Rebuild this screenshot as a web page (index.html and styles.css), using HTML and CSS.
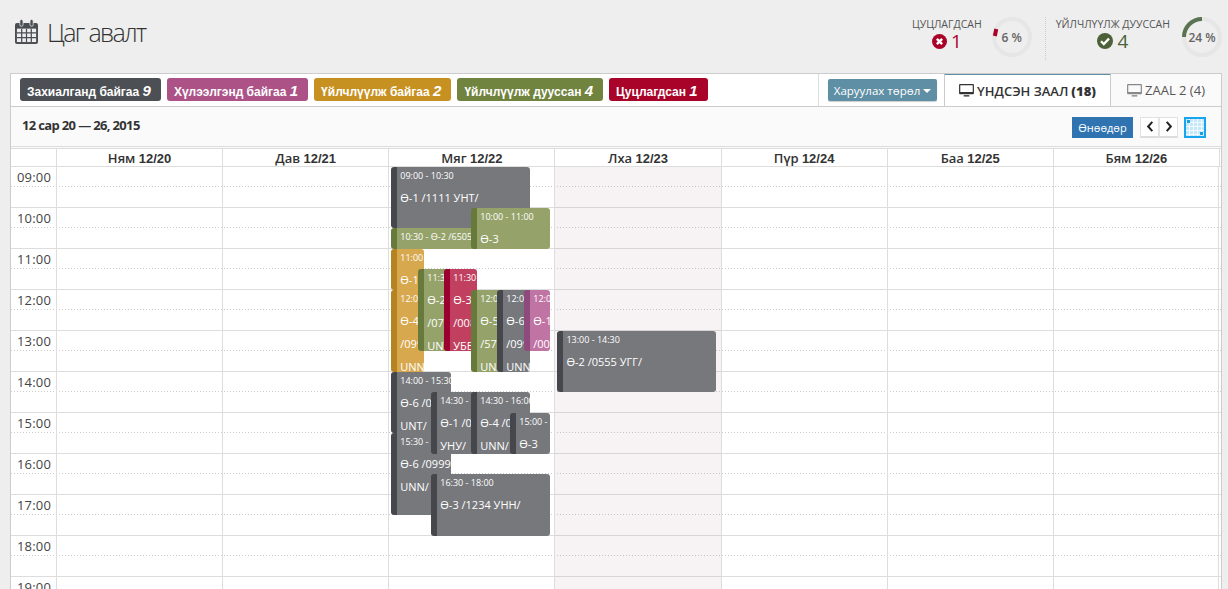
FILE: index.html
```html
<!DOCTYPE html>
<html lang="mn">

<head>
    <meta charset="UTF-8">
    <meta content="width=device-width, initial-scale=1.0" name="viewport">
    <title>Цаг авалт</title>
    <link rel="stylesheet" href="styles.css">
</head>

<body>

    <header class="page-head">
        <h1>
            <svg class="head-icon" viewBox="0 0 24 26" width="23" height="25">
                <path d="M2 4h20a2 2 0 0 1 2 2v18a2 2 0 0 1-2 2H2a2 2 0 0 1-2-2V6a2 2 0 0 1 2-2z" fill="#4a4d52" />
                <path d="M2 10h20v14H2z" fill="#eee" />
                <path d="M7 10v14M12 10v14M17 10v14M2 14.5h20M2 19.5h20" stroke="#4a4d52" stroke-width="1.3" fill="none" />
                <rect x="5" y="0.5" width="3.4" height="7" rx="1.6" fill="#4a4d52" stroke="#eee" stroke-width="0.8" />
                <rect x="15.6" y="0.5" width="3.4" height="7" rx="1.6" fill="#4a4d52" stroke="#eee" stroke-width="0.8" />
            </svg>
            Цаг авалт
        </h1>
        <div class="stats">
            <div class="stat">
                <div class="stat-text">
                    <div class="stat-label">ЦУЦЛАГДСАН</div>
                    <div class="stat-num red">
                        <svg viewBox="0 0 16 16" width="15" height="15">
                            <circle cx="8" cy="8" r="8" fill="#a90329" />
                            <path d="M5.2 5.2l5.6 5.6M10.8 5.2l-5.6 5.6" stroke="#fff" stroke-width="2.6" />
                        </svg>
                        1
                    </div>
                </div>
                <div class="donut">
                    <svg viewBox="0 0 40 40" width="40" height="40">
                        <circle cx="20" cy="20" r="18" fill="none" stroke="#e6e6e6" stroke-width="4" />
                        <path d="M4.3 12l-1.5 7" stroke="#a90329" stroke-width="4" fill="none" />
                    </svg>
                    <span>6 %</span>
                </div>
            </div>
            <div class="stat stat-second">
                <div class="stat-text">
                    <div class="stat-label">ҮЙЛЧЛҮҮЛЖ ДУУССАН</div>
                    <div class="stat-num green">
                        <svg viewBox="0 0 16 16" width="16" height="16">
                            <circle cx="8" cy="8" r="8" fill="#4d6138" />
                            <path d="M4 8.2l2.8 2.8 5.2-5.4" stroke="#fff" stroke-width="2.3" fill="none" />
                        </svg>
                        4
                    </div>
                </div>
                <div class="donut">
                    <svg viewBox="0 0 40 40" width="40" height="40">
                        <circle cx="20" cy="20" r="18" fill="none" stroke="#e6e6e6" stroke-width="4" />
                        <path d="M2 20A18 18 0 0 1 20 2" stroke="#5a7350" stroke-width="4" fill="none" />
                    </svg>
                    <span>24 %</span>
                </div>
            </div>
        </div>
    </header>

    <section class="panel">
        <div class="panel-top">
            <div class="tags">
                <span class="tag tag-dark">Захиалганд байгаа <b>9</b></span>
                <span class="tag tag-pink">Хүлээлгэнд байгаа <b>1</b></span>
                <span class="tag tag-yellow">Үйлчлүүлж байгаа <b>2</b></span>
                <span class="tag tag-green">Үйлчлүүлж дууссан <b>4</b></span>
                <span class="tag tag-red">Цуцлагдсан <b>1</b></span>
            </div>
            <div class="tabs">
                <div class="tab-tool">
                    <button class="btn-type">Харуулах төрөл <i class="caret"></i></button>
                </div>
                <div class="tab active">
                    <svg viewBox="0 0 16 14" width="15" height="13">
                        <path d="M1 0h14a1 1 0 0 1 1 1v9a1 1 0 0 1-1 1H1a1 1 0 0 1-1-1V1a1 1 0 0 1 1-1zm.3 1.3v7.4h13.4V1.3z" fill="#333" />
                        <path d="M5 12h6v1.5H5z" fill="#333" />
                    </svg>
                    ҮНДСЭН ЗААЛ <b>(18)</b>
                </div>
                <div class="tab">
                    <svg viewBox="0 0 16 14" width="15" height="13">
                        <path d="M1 0h14a1 1 0 0 1 1 1v9a1 1 0 0 1-1 1H1a1 1 0 0 1-1-1V1a1 1 0 0 1 1-1zm.3 1.3v7.4h13.4V1.3z" fill="#888" />
                        <path d="M5 12h6v1.5H5z" fill="#888" />
                    </svg>
                    ZAAL 2 (4)
                </div>
            </div>
        </div>

        <div class="toolbar">
            <div class="range">12 сар 20 — 26, 2015</div>
            <div class="tools">
                <button class="btn-today">Өнөөдөр</button>
                <div class="pager">
                    <button>
                        <svg viewBox="0 0 8 12" width="8" height="11"><path d="M6.5 1L2 6l4.5 5" stroke="#222" stroke-width="2.2" fill="none" /></svg>
                    </button>
                    <button>
                        <svg viewBox="0 0 8 12" width="8" height="11"><path d="M1.5 1L6 6l-4.5 5" stroke="#222" stroke-width="2.2" fill="none" /></svg>
                    </button>
                </div>
                <div class="view-icon">
                    <svg viewBox="0 0 18 17" width="18" height="17">
                        <rect width="18" height="17" fill="#c4e8fa" />
                        <path d="M3.5 0v17M7.5 0v17M11.5 0v17M15.5 0v17M0 3.5h18M0 7.5h18M0 11.5h18M0 15.5h18" stroke="#f2fbff" stroke-width="1" />
                        <rect x="1" y="1" width="3" height="3" fill="#1b9fe6" />
                        <rect x="14" y="13" width="3" height="3" fill="#1b9fe6" />
                    </svg>
                </div>
            </div>
        </div>

        <div class="cal-head">
            <div></div>
            <div>Ням <b>12/20</b></div>
            <div>Дав <b>12/21</b></div>
            <div>Мяг <b>12/22</b></div>
            <div>Лха <b>12/23</b></div>
            <div>Пүр <b>12/24</b></div>
            <div>Баа <b>12/25</b></div>
            <div>Бям <b>12/26</b></div>
        </div>

        <div class="cal-body">
            <div class="hour"><span>09:00</span></div>
            <div class="hour"><span>10:00</span></div>
            <div class="hour"><span>11:00</span></div>
            <div class="hour"><span>12:00</span></div>
            <div class="hour"><span>13:00</span></div>
            <div class="hour"><span>14:00</span></div>
            <div class="hour"><span>15:00</span></div>
            <div class="hour"><span>16:00</span></div>
            <div class="hour"><span>17:00</span></div>
            <div class="hour"><span>18:00</span></div>
            <div class="hour"><span>19:00</span></div>

            <div class="days">
                <div class="day"></div>
                <div class="day"></div>
                <div class="day">
                    <div class="ev grey" style="left:2px;top:0;width:139px;height:61px">
                        <time>09:00 - 10:30</time>Ө-1 /1111 УНТ/
                    </div>
                    <div class="ev green" style="left:2px;top:61px;width:100px;height:21px">
                        <time>10:30 - Ө-2 /6505 УУН/</time>
                    </div>
                    <div class="ev green" style="left:82px;top:41px;width:79px;height:41px">
                        <time>10:00 - 11:00</time>Ө-3
                    </div>
                    <div class="ev yellow" style="left:2px;top:82px;width:33px;height:41px">
                        <time>11:00 - 12:00</time>Ө-1
                    </div>
                    <div class="ev yellow" style="left:2px;top:123px;width:33px;height:82px">
                        <time>12:00 - 13:30</time>Ө-4<br>/0999<br>UNN/
                    </div>
                    <div class="ev green" style="left:29px;top:102px;width:33px;height:82px">
                        <time>11:30 - 13:00</time>Ө-2<br>/0777<br>UNT/
                    </div>
                    <div class="ev red" style="left:55px;top:102px;width:33px;height:82px">
                        <time>11:30 - 13:00</time>Ө-3<br>/0088<br>УБЕ/
                    </div>
                    <div class="ev green" style="left:82px;top:123px;width:33px;height:82px">
                        <time>12:00 - 13:30</time>Ө-5<br>/5790<br>UNA/
                    </div>
                    <div class="ev grey" style="left:108px;top:123px;width:33px;height:82px">
                        <time>12:00 - 13:30</time>Ө-6<br>/0999<br>UNN/
                    </div>
                    <div class="ev pink" style="left:135px;top:123px;width:26px;height:61px">
                        <time>12:00 - 13:00</time>Ө-1<br>/0088
                    </div>
                    <div class="ev grey" style="left:2px;top:205px;width:60px;height:61px">
                        <time>14:00 - 15:30</time>Ө-6 /0999<br>UNT/
                    </div>
                    <div class="ev grey" style="left:2px;top:266px;width:60px;height:82px">
                        <time>15:30 - 17:30</time>Ө-6 /0999<br>UNN/
                    </div>
                    <div class="ev grey" style="left:42px;top:225px;width:60px;height:62px">
                        <time>14:30 - 16:00</time>Ө-1 /0999<br>УНУ/
                    </div>
                    <div class="ev grey" style="left:82px;top:225px;width:59px;height:62px">
                        <time>14:30 - 16:00</time>Ө-4 /0999<br>UNN/
                    </div>
                    <div class="ev grey" style="left:121px;top:246px;width:40px;height:41px">
                        <time>15:00 - 16:00</time>Ө-3
                    </div>
                    <div class="ev grey" style="left:42px;top:307px;width:119px;height:62px">
                        <time>16:30 - 18:00</time>Ө-3 /1234 УНН/
                    </div>
                </div>
                <div class="day today">
                    <div class="ev grey" style="left:2px;top:164px;width:159px;height:61px">
                        <time>13:00 - 14:30</time>Ө-2 /0555 УГГ/
                    </div>
                </div>
                <div class="day"></div>
                <div class="day"></div>
                <div class="day"></div>
            </div>
        </div>
    </section>

</body>

</html>
```

FILE: styles.css
```css
html,
body {
    height: 589px;
    overflow: hidden;
}

body {
    margin: 0;
    padding: 0 6px 0 10px;
    background: #eeeeee;
    font-family: "Open Sans", Arial, sans-serif;
    color: #333;
}

.page-head {
    display: flex;
    justify-content: space-between;
    height: 73px;
}

h1 {
    display: flex;
    align-items: center;
    gap: 9px;
    margin: 0 0 10px 5px;
    font-size: 25px;
    font-weight: 300;
    letter-spacing: -1.7px;
    color: #333;
}

.stats {
    display: flex;
    padding-top: 17px;
}

.stat {
    display: flex;
    gap: 10px;
    height: 43px;
}

.stat-second {
    margin-left: 13px;
    padding-left: 10px;
    border-left: 1px dotted #ccc;
    gap: 12px;
}

.stat-text {
    text-align: center;
    padding-top: 1px;
}

.stat-label {
    font-size: 10.5px;
    line-height: 13px;
    color: #555;
}

.stat-num {
    display: flex;
    justify-content: center;
    align-items: center;
    gap: 4px;
    font-size: 19px;
    line-height: 20px;
}

.red {
    color: #a90329;
}

.green {
    color: #4d6138;
}

.donut {
    position: relative;
    width: 40px;
    height: 40px;
}

.donut span {
    position: absolute;
    inset: 0;
    line-height: 42px;
    text-align: center;
    font-size: 12px;
    font-weight: 600;
    white-space: nowrap;
    color: #666;
}

.panel {
    height: 516px;
    overflow: hidden;
    background: #fafafa;
    border: 1px solid #ccc;
    border-bottom: 0;
}

.panel-top {
    display: flex;
    justify-content: space-between;
    height: 32px;
    border-bottom: 1px solid #ccc;
    background: #fff;
}

.tags {
    display: flex;
    gap: 6px;
    padding: 4px 0 0 9px;
}

.tag {
    height: 23px;
    padding: 0 10px 0 7px;
    border-radius: 3px;
    font-family: "Liberation Sans", Arial, sans-serif;
    font-size: 12px;
    font-weight: 700;
    line-height: 25px;
    color: #fff;
    white-space: nowrap;
}

.tag b {
    font-size: 15px;
    font-style: italic;
}

.tag-dark {
    background: #4c4f53;
}

.tag-pink {
    background: #ac5287;
}

.tag-yellow {
    background: #c79121;
}

.tag-green {
    background: #71843f;
}

.tag-red {
    background: #a90329;
}

.tabs {
    display: flex;
    font-size: 12px;
}

.tab-tool {
    padding: 5px 7px 0 9px;
    border-left: 1px solid #ddd;
}

.btn-type {
    height: 22px;
    width: 109px;
    padding: 0;
    border: 0;
    border-radius: 2px;
    background: #5f8fa4;
    font-family: inherit;
    font-size: 11.5px;
    color: #fff;
    box-shadow: 0 1px 1px rgba(0, 0, 0, 0.2);
}

.caret {
    display: inline-block;
    border: 4px solid transparent;
    border-top-color: #fff;
    border-bottom: 0;
    vertical-align: 2px;
}

.tab {
    display: flex;
    align-items: center;
    justify-content: center;
    gap: 3px;
    width: 110px;
    height: 32px;
    font-size: 13px;
    color: #555;
    background: #fafafa;
}

.tab.active {
    width: 167px;
    height: 33px;
    box-sizing: border-box;
    background: #fff;
    border: 1px solid #ccc;
    border-top: 2px solid #5f8fa4;
    border-bottom: 0;
    margin-top: -1px;
    font-weight: 600;
    color: #333;
}

.toolbar {
    display: flex;
    justify-content: space-between;
    height: 42px;
    padding: 10px 15px 0 11px;
    box-sizing: border-box;
    border-bottom: 3px double #ddd;
}

.range {
    font-size: 13px;
    font-weight: 700;
    letter-spacing: -0.65px;
    line-height: 16px;
}

.tools {
    display: flex;
    gap: 7px;
    height: 21px;
}

.btn-today {
    width: 61px;
    height: 21px;
    padding: 0;
    border: 0;
    background: #2f74b0;
    color: #fff;
    font-family: inherit;
    font-size: 11px;
}

.pager {
    display: flex;
    width: 38px;
}

.pager button {
    flex: 1;
    height: 21px;
    padding: 0;
    border: 1px solid #e2e2e2;
    border-bottom: 2px solid #ddd;
    background: #fff;
}

.view-icon {
    width: 18px;
    height: 17px;
    border: 2px solid #19a5ee;
    margin-left: -1px;
}

.cal-head {
    display: grid;
    grid-template-columns: 46px repeat(7, 166.15px);
    height: 17px;
    background: #fff;
    border-bottom: 1px solid #ddd;
    font-size: 13px;
    font-weight: 600;
    line-height: 18px;
    text-align: center;
    color: #333;
}

.cal-head div {
    border-right: 1px solid #ddd;
    box-sizing: border-box;
}

.cal-head b {
    font-family: "Liberation Sans", Arial, sans-serif;
}

.cal-body {
    position: relative;
    background: #fff;
}

.hour {
    box-sizing: border-box;
    height: 41px;
    border-bottom: 1px solid #ddd;
    background: linear-gradient(to right, #ccc 34%, transparent 34%) 0 19px / 3px 1px repeat-x;
    font-size: 13px;
    letter-spacing: 0.2px;
    color: #444;
}

.hour span {
    display: block;
    width: 46px;
    padding-top: 2px;
    text-align: center;
    line-height: 16px;
}

.days {
    position: absolute;
    top: 0;
    left: 45px;
    bottom: 0;
    display: grid;
    grid-template-columns: repeat(7, 166.15px);
}

.day {
    position: relative;
    box-sizing: border-box;
    border-left: 1px solid #ddd;
}

.day:last-child {
    border-right: 1px solid #ddd;
}

.day.today {
    background: rgba(170, 110, 130, 0.09);
}

.ev {
    position: absolute;
    box-sizing: border-box;
    overflow: hidden;
    padding: 3px 0 0 3px;
    border-left: 6px solid;
    border-radius: 3px;
    font-size: 11px;
    line-height: 23px;
    color: #fff;
    white-space: nowrap;
}

.ev time {
    display: block;
    margin-bottom: 4px;
    font-size: 9px;
    line-height: 12px;
}

.grey {
    background: #77787c;
    border-color: #45474c;
}

.green.ev {
    background: #95a36a;
    border-color: #677a3b;
}

.yellow {
    background: #d8a84e;
    border-color: #b58420;
}

.red.ev {
    background: #c2405f;
    border-color: #9a0030;
}

.pink {
    background: #c074a4;
    border-color: #8e4a7c;
}
```
